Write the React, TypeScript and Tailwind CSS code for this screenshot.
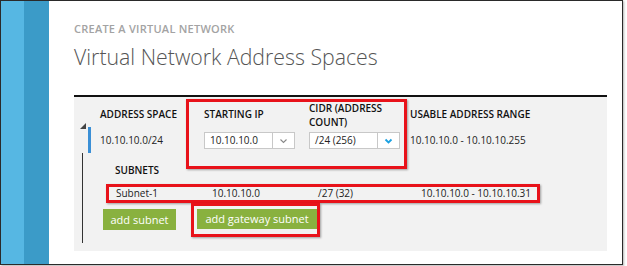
import React from "react";

const font = { fontFamily: '"Open Sans", "Liberation Sans", sans-serif' };

function Chevron({ color, width = 1.3 }: { color: string; width?: number }) {
  return (
    <svg width="9" height="6" viewBox="0 0 9 6">
      <path d="M1.5 1.5 L4.5 4.5 L7.5 1.5" fill="none" stroke={color} strokeWidth={width} />
    </svg>
  );
}

function Select({ value, chevron, strong }: { value: string; chevron: string; strong?: boolean }) {
  return (
    <div className="flex h-[17px] w-[91px] border border-[#c8c8c8] bg-white">
      <div className="flex flex-1 items-center pl-[5px] text-[10px] text-[#222]">{value}</div>
      <div className="flex w-[22px] items-center justify-center border-l border-[#c8c8c8]">
        <Chevron color={chevron} width={strong ? 1.8 : 1.1} />
      </div>
    </div>
  );
}

export default function App() {
  return (
    <div className="h-[266px] w-[627px] bg-white" style={font}>
      <div className="flex h-[265px] w-[623px] border border-[#2a2a2a] shadow-[1px_1px_2px_rgba(0,0,0,0.3)]">
        <div className="w-[23px] bg-[#56b7e3]" />
        <div className="w-[25px] bg-[#3b9bc8]" />
        <div className="flex flex-1 flex-col pl-[25px]">
          <div className="mt-[21px] whitespace-nowrap text-[11px] font-semibold leading-[14px] tracking-[0.25px] text-[#a3a3a3]">
            CREATE A VIRTUAL NETWORK
          </div>
          <div className="mt-[6px] whitespace-nowrap text-[21.3px] font-light leading-[30px] text-[#555]">
            Virtual Network Address Spaces
          </div>
          <div className="mt-[23px] h-[156px] w-[533px] border-t-2 border-[#111] bg-[#f2f2f2]">
            <div className="flex pt-[2px]">
              {/* col 1 */}
              <div className="flex w-[112px] flex-col">
                <div className="mt-[8px] pl-[26px] text-[10px] font-semibold leading-[14px] text-[#111]">
                  ADDRESS SPACE
                </div>
                <div className="mt-[6px] flex h-[26px]">
                  <div className="ml-[6px] mt-[-4px] h-[7px] w-[7px]">
                    <svg width="6" height="6" viewBox="0 0 6 6">
                      <polygon points="6,0 6,6 0,6" fill="#444" />
                    </svg>
                  </div>
                  <div className="ml-[1px] h-[26px] w-[3px] bg-[#3a8fd6]" />
                  <div className="ml-[9px] flex items-center text-[10px] leading-[14px] text-[#222]">10.10.10.0/24</div>
                </div>
              </div>
              {/* red box */}
              <div className="flex h-[70px] w-[221px] border-[3px] border-[#e8121a] pl-[15px] shadow-[1px_1px_2px_rgba(0,0,0,0.35)]">
                <div className="flex w-[105px] flex-col">
                  <div className="mt-[5px] text-[10px] font-semibold leading-[14px] text-[#111]">STARTING IP</div>
                  <div className="mt-[11px]">
                    <Select value="10.10.10.0" chevron="#888" />
                  </div>
                </div>
                <div className="flex flex-col">
                  <div className="mt-[-1px] text-[10px] font-semibold leading-[14px] text-[#111]">
                    CIDR (ADDRESS
                    <br />
                    COUNT)
                  </div>
                  <div className="mt-[3px]">
                    <Select value="/24 (256)" chevron="#1ba1e2" strong />
                  </div>
                </div>
              </div>
              {/* col 4 */}
              <div className="flex flex-col pl-[3px]">
                <div className="mt-[8px] text-[10px] font-semibold leading-[14px] text-[#111]">
                  USABLE ADDRESS RANGE
                </div>
                <div className="mt-[12px] text-[10px] leading-[14px] text-[#222]">10.10.10.0 - 10.10.10.255</div>
              </div>
            </div>
            {/* subnets */}
            <div className="flex">
              <div className="ml-[8px] mt-[-16px] h-[90px] w-px bg-[#333]" />
              <div className="ml-[20px] flex flex-col">
                <div className="mt-[-6px] pl-[12px] text-[10px] font-semibold leading-[14px] text-[#111]">SUBNETS</div>
                <div className="ml-[3px] mt-[7px] flex h-[19px] w-[434px] items-center border-[3px] border-[#e8121a] pl-[7px] text-[10px] text-[#222] shadow-[1px_1px_2px_rgba(0,0,0,0.35)]">
                  <div className="w-[96px]">Subnet-1</div>
                  <div className="w-[106px]">10.10.10.0</div>
                  <div className="w-[103px]">/27 (32)</div>
                  <div>10.10.10.0 - 10.10.10.31</div>
                </div>
                <div className="flex items-start">
                  <div className="mt-[6px] flex h-[21px] w-[73px] items-center justify-center whitespace-nowrap bg-[#89b13f] text-[11px] leading-[16px] text-white">
                    add subnet
                  </div>
                  <div className="ml-[15px] flex h-[34px] w-[129px] border-[3px] border-[#e8121a] pl-[3px] pt-[3px] shadow-[1px_1px_2px_rgba(0,0,0,0.35)]">
                    <div className="flex h-[20px] w-[120px] items-center justify-center whitespace-nowrap bg-[#89b13f] text-[11px] leading-[16px] text-white">
                      add gateway subnet
                    </div>
                  </div>
                </div>
              </div>
            </div>
          </div>
        </div>
      </div>
    </div>
  );
}
